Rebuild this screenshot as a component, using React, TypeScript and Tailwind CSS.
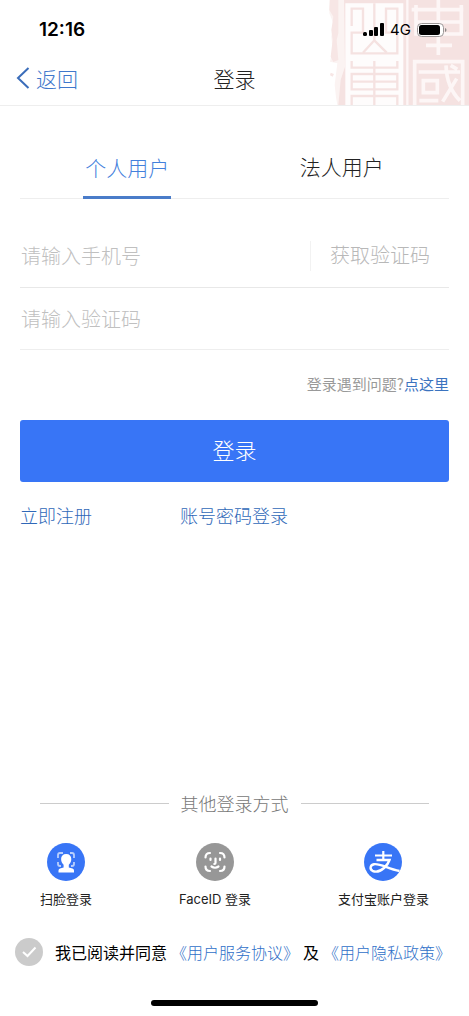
function SealMark() {
  return (
    <svg viewBox="0 0 447 315" className="absolute top-0 right-0 h-full" fill="none" aria-hidden="true">
      <path d="M28 0H447V315H52L48 292L44 255L52 190L30 185L38 150L34 110L40 70L28 40Z" fill="#fbf3f2" />
      <path d="M30 0H55V100L50 120L55 180L40 186L32 170L38 120L34 90L40 50L28 30Z" fill="#f7e6e5" />
      <path d="M32 218L42 222L38 230L30 226Z" fill="#f7e6e5" />
      <path d="M72 0H447V315H55L62 240L75 200Z" fill="#f5e2e1" />
      <path d="M76 10H250V315H76Z" fill="#fefcfc" />
      <g stroke="#f5e2e1" strokeWidth="7">
        <path d="M95 78V26H129V98H95V160H232V98H198V26H232V78" />
        <path d="M163 10V120M129 158L163 121L200 158" />
        <path d="M95 183V203H232V183M95 222H232V268H95ZM95 245H232M163 183V315M95 315V288H232V315" />
      </g>
      <g stroke="#fdf6f6" strokeWidth="11">
        <path d="M262 0V315" strokeWidth="7" />
        <path d="M275 29H430M355 0V165M288 15V102H424V15M288 66H424M318 136H396" />
        <path d="M284 315V185H428V315M296 216H420M310 242H352V278H310ZM378 196Q380 262 420 302M410 236L368 305M298 302H355M392 196L412 208" />
      </g>
    </svg>
  )
}

function StatusBar() {
  return (
    <div className="flex items-center justify-between pt-4 pl-[39px] pr-[22px]">
      <span className="font-[Inter] text-[19px] font-semibold leading-7 text-black">12:16</span>
      <div className="flex items-center gap-[6px]">
        <svg width="21" height="14" viewBox="0 0 21 14" fill="#000" aria-hidden="true">
          <rect x="0" y="9" width="4" height="4" rx="1.500" />
          <rect x="6" y="7" width="4" height="6" rx="1" />
          <rect x="11" y="4" width="4" height="9" rx="1" />
          <rect x="17" y="0" width="4" height="13" rx="1" />
        </svg>
        <span className="font-[Inter] text-[15px] font-normal leading-5 text-black">4G</span>
        <svg width="30" height="14" viewBox="0 0 30 14" aria-hidden="true">
          <rect x="0.5" y="0.5" width="26" height="13" rx="4" fill="#fff" stroke="#9b9797" />
          <rect x="2" y="2" width="21" height="10" rx="2.5" fill="#000" />
          <path d="M28 5V9Q29.500 8.500 29.500 7T28 5Z" fill="#8a8787" />
        </svg>
      </div>
    </div>
  )
}

function FaceScanIcon() {
  return (
    <svg width="38" height="38" viewBox="0 0 38 38" fill="none" aria-hidden="true">
      <circle cx="19" cy="19" r="19" fill="#3875f6" />
      <path d="M11 15V12Q11 10 13 10H16M23 10H25Q27 10 27 12V15M11 19V21Q11 23 13 23H14M27 19V21Q27 23 25 23H24" stroke="#b9cffc" strokeWidth="1.800" />
      <path d="M19.200 11C22.500 11 24.300 13 24.300 16C24.300 18.800 23 20.500 21.800 21.800V24.500L25.500 25.500Q27 26 27 27.500V29.500H11.500V27.500Q11.500 26 13 25.500L16.600 24.500V21.800C15.400 20.500 14.100 18.800 14.100 16C14.100 13 15.900 11 19.200 11Z" fill="#fff" />
    </svg>
  )
}

function FaceIdIcon() {
  return (
    <svg width="38" height="38" viewBox="0 0 38 38" fill="none" aria-hidden="true">
      <circle cx="19" cy="19" r="19" fill="#979797" />
      <g stroke="#fff" strokeWidth="2.200" strokeLinecap="round">
        <path d="M9.500 14.500Q9.500 10 14 10M24 10Q28.500 10 28.500 14.500M28.500 23.500Q28.500 28 24 28M14 28Q9.500 28 9.500 23.500" />
        <path d="M14.500 15.500V17M24 15.500V17M19.500 15.500V20Q19.500 21 18.300 21M15.500 23.500Q19 26 22.500 23.500" />
      </g>
    </svg>
  )
}

function AlipayIcon() {
  return (
    <svg width="38" height="38" viewBox="0 0 38 38" fill="none" aria-hidden="true">
      <circle cx="19" cy="19" r="19" fill="#3875f6" />
      <g stroke="#fff">
        <path d="M11 12.500H28M19.300 8V17" strokeWidth="2.200" />
        <path d="M12.500 17H25.500C24.500 20 22.500 22.800 20 25C16 28.500 11.500 29.200 8.500 27.800C5.500 26 6 22 10 21.200C16.500 20.200 24 26 35.500 28" strokeWidth="2.400" />
      </g>
    </svg>
  )
}

const methods = [
  { label: '扫脸登录', icon: <FaceScanIcon /> },
  { label: 'FaceID 登录', icon: <FaceIdIcon /> },
  { label: '支付宝账户登录', icon: <AlipayIcon /> },
]

const fieldClass = 'min-w-0 flex-1 pl-px text-xl outline-none placeholder:text-[#c0c0c0]'

export default function App() {
  return (
    <div className="flex min-h-screen flex-col bg-white font-['Noto_Sans_CJK_SC',sans-serif] font-light text-[#222]">
      <header className="relative h-[106px] shrink-0 border-b border-[#eee]">
        <SealMark />
        <div className="relative">
          <StatusBar />
          <div className="mt-[18px] grid grid-cols-3 items-center px-4 text-[21px] leading-8">
            <a href="#" className="flex items-center gap-[6px] text-[#3f78cc]">
              <svg width="14" height="22" viewBox="0 0 14 22" fill="none" stroke="#3b6dba" strokeWidth="2" aria-hidden="true">
                <path d="M12.500 1L2 11L12.500 21" />
              </svg>
              返回
            </a>
            <h1 className="text-center">登录</h1>
          </div>
        </div>
      </header>

      <main className="px-5 pt-11">
        <div role="tablist" className="grid grid-cols-2 justify-items-center border-b border-[#eee] text-[21px] leading-8">
          <button role="tab" aria-selected="true" className="-mb-px border-b-3 border-[#4a7cc9] px-[2px] pb-[13px] text-[#4380dc]">个人用户</button>
          <button role="tab" aria-selected="false" className="pb-4">法人用户</button>
        </div>

        <form className="pt-[26px]">
          <div className="flex h-[63px] items-center border-b border-[#e8e8e8]">
            <input type="tel" aria-label="手机号" placeholder="请输入手机号" className={fieldClass} />
            <button type="button" className="border-l border-[#f2f2f2] pr-[19px] pb-[2px] pl-[19px] text-xl text-[#b8b8b8]">获取验证码</button>
          </div>
          <div className="flex h-[62px] items-center border-b border-[#eee]">
            <input type="text" aria-label="验证码" placeholder="请输入验证码" className={fieldClass} />
          </div>
          <p className="pt-[22px] text-right text-[15px] font-normal leading-6 text-[#999]">
            登录遇到问题?<a href="#" className="text-[#3b73bf]">点这里</a>
          </p>
          <button type="submit" className="mt-6 h-[62px] w-full rounded-[3px] bg-[#3875f6] pb-[3px] text-[22px] text-white">登录</button>
        </form>

        <div className="flex gap-[88px] pt-[19px] text-lg leading-7 text-[#2f68b8]">
          <a href="#">立即注册</a>
          <a href="#">账号密码登录</a>
        </div>
      </main>

      <footer className="mt-auto pb-[10px]">
        <div className="flex items-center gap-3 px-10 text-lg leading-7 text-[#777]">
          <span className="h-px flex-1 bg-[#ccc]" />
          其他登录方式
          <span className="h-px flex-1 bg-[#ccc]" />
        </div>
        <div className="flex justify-between px-10 pt-[26px]">
          {methods.map(m => (
            <button key={m.label} type="button" className="flex flex-col items-center gap-2 font-[Inter,'Noto_Sans_CJK_SC',sans-serif] text-[13px] font-normal leading-5">
              {m.icon}
              {m.label}
            </button>
          ))}
        </div>
        <div className="flex items-center gap-3 px-[15px] pt-[29px] text-base font-normal leading-7 text-black">
          <span className="relative flex">
            <input id="agree" type="checkbox" className="size-7 appearance-none rounded-full bg-[#cbcbcb] checked:bg-[#3875f6]" />
            <svg className="pointer-events-none absolute inset-0" width="28" height="28" viewBox="0 0 28 28" fill="none" stroke="#fff" strokeWidth="2" aria-hidden="true">
              <path d="M8 14L12.500 18L20.500 9.500" />
            </svg>
          </span>
          <p className="flex whitespace-nowrap">
            <label htmlFor="agree">我已阅读并同意</label>
            <a href="#" className="ml-1 font-light text-[#2f70c8]">《用户服务协议》</a>
            <span className="mx-1">及</span>
            <a href="#" className="font-light text-[#2f70c8]">《用户隐私政策》</a>
          </p>
        </div>
        <div className="mx-auto mt-[34px] h-[6px] w-[167px] rounded-full bg-black" />
      </footer>
    </div>
  )
}
